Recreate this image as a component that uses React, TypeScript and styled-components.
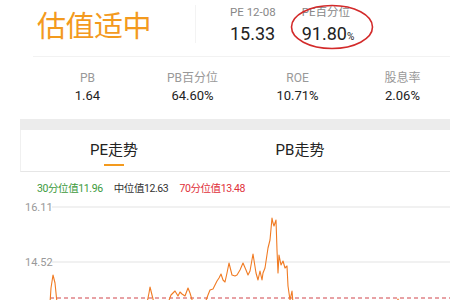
import styled, { createGlobalStyle } from 'styled-components';

const GlobalStyle = createGlobalStyle`
  html, body {
    margin: 0;
    padding: 0;
    background: #fff;
    overflow: hidden;
  }
  body {
    font-family: Roboto, "Noto Sans CJK SC", sans-serif;
  }
`;

const Page = styled.div`
  width: 450px;
  height: 300px;
  overflow: hidden;
  background: #fff;
`;

const Header = styled.div`
  display: flex;
  align-items: stretch;
  height: 56px;
  margin-left: 33px;
  border-bottom: 1px solid #f2f2f2;
`;

const Verdict = styled.div`
  width: 158px;
  height: 38px;
  margin-top: 5px;
  padding-left: 4px;
  border-right: 1px solid #f3f3f3;
  display: flex;
  align-items: center;
  font-size: 29px;
  color: #f39a1e;
  letter-spacing: -0.5px;
`;

const Quote = styled.div<{ $left: number }>`
  position: relative;
  margin-left: ${({ $left }) => $left}px;
  padding-top: 5px;
`;

const QuoteLabel = styled.div`
  font-size: 11.5px;
  line-height: 14px;
  color: #888;
`;

const QuoteValue = styled.div`
  margin-top: 4px;
  font-size: 18px;
  line-height: 22px;
  color: #222;
  & > small {
    font-size: 10px;
  }
`;

const Circle = styled.svg`
  position: absolute;
  left: -12px;
  top: 4px;
  width: 84px;
  height: 46px;
  pointer-events: none;
`;

const Stats = styled.div`
  display: grid;
  grid-template-columns: repeat(4, 105px);
  padding-left: 35px;
  padding-top: 13px;
  height: 46px;
`;

const Stat = styled.div`
  text-align: center;
`;

const StatLabel = styled.div`
  font-size: 12px;
  line-height: 16px;
  color: #999;
`;

const StatValue = styled.div`
  margin-top: 1px;
  font-size: 13px;
  line-height: 17px;
  color: #222;
`;

const Band = styled.div`
  height: 11px;
  margin-left: 20px;
  margin-top: 3px;
  background: #ececec;
`;

const Tabs = styled.div`
  display: grid;
  grid-template-columns: 186px 186px;
  height: 41px;
  margin-left: 20px;
  border-left: 1px solid #f0f0f0;
  border-bottom: 1px solid #e6e6e6;
`;

const Tab = styled.div<{ $active?: boolean }>`
  position: relative;
  text-align: center;
  padding-top: 11px;
  font-size: 15px;
  line-height: 18px;
  color: #222;
  &::after {
    content: '';
    display: ${({ $active }) => ($active ? 'block' : 'none')};
    position: absolute;
    left: 50%;
    bottom: 5px;
    width: 20px;
    height: 2px;
    margin-left: -10px;
    background: #f39a1e;
  }
`;

const Legend = styled.div`
  display: flex;
  gap: 11px;
  padding-left: 37px;
  padding-top: 10px;
  font-size: 10.5px;
  line-height: 14px;
  letter-spacing: -0.4px;
`;

const LegendItem = styled.span<{ $color: string }>`
  color: ${({ $color }) => $color};
`;

const Chart = styled.svg`
  display: block;
  margin-top: 2px;
`;

const series = [
  [50, 300], [51, 285], [53, 272], [55, 280], [57, 300],
  [147, 300], [149, 290], [150, 284], [152, 292], [154, 300],
  [168, 300], [171, 292], [175, 288], [178, 293], [180, 289], [182, 291],
  [185, 293], [188, 285], [190, 290], [193, 300],
  [205, 300], [208, 292], [210, 287], [213, 286], [215, 282], [217, 278],
  [219, 275], [221, 271], [223, 277], [225, 279], [227, 270], [229, 260],
  [232, 272], [235, 273], [237, 272], [240, 267], [243, 260], [246, 267],
  [248, 272], [250, 268], [253, 251], [256, 270], [258, 277], [260, 268],
  [262, 277], [263, 270], [265, 265], [268, 245], [270, 237], [272, 215],
  [273, 220], [274, 223], [276, 217], [277, 247], [278, 270], [279, 252],
  [281, 262], [283, 258], [285, 265], [287, 263], [288, 283], [290, 297],
  [292, 288], [293, 300],
  [397, 300], [398, 296], [399, 300],
];

const toPoints = () =>
  series.map(([x, y]) => `${x},${y - 195}`).join(' ');

export default function App() {
  return (
    <Page>
      <GlobalStyle />
      <Header>
        <Verdict>估值适中</Verdict>
        <Quote $left={34}>
          <QuoteLabel>PE 12-08</QuoteLabel>
          <QuoteValue>15.33</QuoteValue>
        </Quote>
        <Quote $left={26}>
          <QuoteLabel>PE百分位</QuoteLabel>
          <QuoteValue>
            91.80<small>%</small>
          </QuoteValue>
          <Circle viewBox="0 0 84 46">
            <ellipse cx="42" cy="23" rx="40.5" ry="21.5" fill="none" stroke="#d32a2a" strokeWidth="1.6" />
          </Circle>
        </Quote>
      </Header>
      <Stats>
        <Stat>
          <StatLabel>PB</StatLabel>
          <StatValue>1.64</StatValue>
        </Stat>
        <Stat>
          <StatLabel>PB百分位</StatLabel>
          <StatValue>64.60%</StatValue>
        </Stat>
        <Stat>
          <StatLabel>ROE</StatLabel>
          <StatValue>10.71%</StatValue>
        </Stat>
        <Stat>
          <StatLabel>股息率</StatLabel>
          <StatValue>2.06%</StatValue>
        </Stat>
      </Stats>
      <Band />
      <Tabs>
        <Tab $active>PE走势</Tab>
        <Tab>PB走势</Tab>
      </Tabs>
      <Legend>
        <LegendItem $color="#3c9a3c">30分位值11.96</LegendItem>
        <LegendItem $color="#333">中位值12.63</LegendItem>
        <LegendItem $color="#e0303a">70分位值13.48</LegendItem>
      </Legend>
      <Chart width="450" height="105" viewBox="0 0 450 105">
        <line x1="52" y1="9" x2="450" y2="9" stroke="#ececec" strokeWidth="1.5" />
        <line x1="52" y1="64" x2="450" y2="64" stroke="#ececec" strokeWidth="1.5" />
        <text x="25" y="13" fontSize="11" fill="#999" fontFamily="Roboto, sans-serif">16.11</text>
        <text x="25" y="68" fontSize="11" fill="#999" fontFamily="Roboto, sans-serif">14.52</text>
        <line x1="50" y1="100" x2="450" y2="100" stroke="#d0454a" strokeWidth="1" strokeDasharray="4 3" />
        <polyline points={toPoints()} fill="none" stroke="#f07a22" strokeWidth="1.1" strokeLinejoin="round" />
      </Chart>
    </Page>
  );
}
